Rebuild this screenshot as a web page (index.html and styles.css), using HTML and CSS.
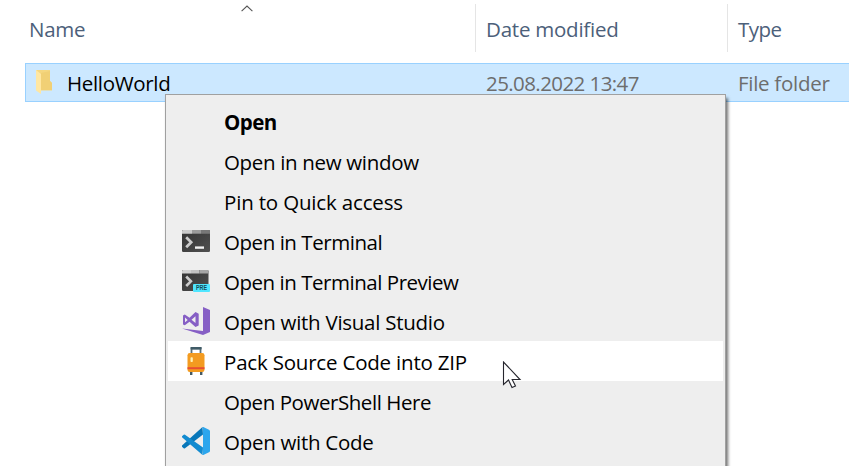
FILE: index.html
```html
<!DOCTYPE html>
<html lang="en">
<head>
<meta charset="utf-8">
<title>Explorer</title>
<link rel="stylesheet" href="styles.css">
</head>
<body>
<main class="explorer">
  <header class="columns">
    <div class="column"><span class="t-name">Name</span></div>
    <div class="column"><span class="t-date">Date modified</span></div>
    <div class="column"><span class="t-type">Type</span></div>
  </header>
  <svg class="sort" viewBox="0 0 12 7"><path d="M.6 6.2 6 1l5.4 5.2" fill="none" stroke="#555" stroke-width="1.1"/></svg>
  <section class="file">
    <div class="file-name">
      <svg class="folder" viewBox="0 0 18 25">
        <path d="M1 1h14v11l2 2v7.500H5z" fill="#f5d780"/>
        <path d="M6 4l9-2v10l2 2v7H6z" fill="#f1d075"/>
        <path d="M1 1l5 4v20l-5-3.500z" fill="#ffe7a2"/>
      </svg>
      <span class="t-hello">HelloWorld</span>
    </div>
    <div class="meta"><span class="t-stamp">25.08.2022 13:47</span></div>
    <div class="meta"><span class="t-folder">File folder</span></div>
  </section>
</main>
<nav class="menu">
  <div class="item"><span class="icon"></span><b class="m1">Open</b></div>
  <div class="item"><span class="icon"></span><span class="m2">Open in new window</span></div>
  <div class="item"><span class="icon"></span><span class="m3">Pin to Quick access</span></div>
  <div class="item"><svg class="icon" viewBox="0 0 28 28">
    <defs><linearGradient id="term" x1="0" y1="0" x2="1" y2="1"><stop stop-color="#333"/><stop offset="1" stop-color="#505050"/></linearGradient></defs>
    <rect y="3" width="28" height="22" rx="1.2" fill="url(#term)"/>
    <path d="M1.2 3H10v3.700H0V4.200Q0 3 1.200 3z" fill="#cbcbcb"/><path d="M10 3h9v3.700h-9z" fill="#9b9b9b"/><path d="M19 3h7.800q1.200 0 1.200 1.200v2.500h-9z" fill="#777"/>
    <path d="M4.200 10.300l5 5-5 5" fill="none" stroke="#ccc" stroke-width="2.700"/><path d="M13 19.400h9v2.400h-9z" fill="#f2f2f2"/>
  </svg><span class="m4">Open in Terminal</span></div>
  <div class="item"><svg class="icon" viewBox="0 0 28 28">
    <rect y="3" width="26.500" height="21" rx="1.200" fill="url(#term)"/>
    <path d="M1.200 3H9v3.500H0V4.200Q0 3 1.200 3z" fill="#d2d2d2"/><path d="M9 3h8.500v3.500H9z" fill="#c2c2c2"/><path d="M17.500 3h8q1 0 1 1.200v2.300h-9z" fill="#a5a5a5"/>
    <path d="M4.200 9.500l4.700 4.800L4.200 19" fill="none" stroke="#ccc" stroke-width="2.600"/>
    <rect x="11" y="17" width="17" height="8" rx="1" fill="#50e6ff"/>
    <text x="14" y="23.400" class="pre" textLength="11" lengthAdjust="spacingAndGlyphs">PRE</text>
  </svg><span class="m5">Open in Terminal Preview</span></div>
  <div class="item"><svg class="icon" viewBox="0 0 28 28">
    <path d="M21 0l7 3v22l-7 3L0 21.500l21 2.400z" fill="#865fc5"/>
    <path fill-rule="evenodd" d="M1 8.500 2.800 7.500 7.500 10.800 13.500 5l3.200 1.800v11.700L13.500 20l-6-5.200-4.700 3.500L1 17.500zM3 10.500v4.800l2.700-2.400zM13.500 9.300l-4 3.400 4 3.400z" fill="#865fc5"/>
  </svg><span class="m6">Open with Visual Studio</span></div>
  <div class="item selected"><svg class="icon" viewBox="0 0 28 28">
    <path d="M9.500 7V1.500h9V7" fill="none" stroke="#5b7079" stroke-width="1.800"/><path d="M8.600 0h11v2.400h-11z" fill="#405b67"/>
    <path d="M7.500 24h3v1.500h-3zm10.500 0h3v1.500h-3z" fill="#ccd5dc"/><path d="M8 25h2.400v3H8zm10 0h2.400v3H18z" fill="#455a64"/>
    <rect x="5.500" y="6" width="17" height="19" rx="2.300" fill="#f39b20"/><path d="M5.500 20.200h17v2h-17z" fill="#e84e32"/><rect x="8.500" y="10.300" width="2.300" height="4.700" rx=".8" fill="#fff1b5"/>
  </svg><span class="m7">Pack Source Code into ZIP</span></div>
  <div class="item"><span class="icon"></span><span class="m8">Open PowerShell Here</span></div>
  <div class="item"><svg class="icon" viewBox="0 0 28 28">
    <path d="M0 18.500 20.500 0 21 7.500 3 21.200q-.7.500-1.300 0L0 19.700z" fill="#0877b9"/>
    <path d="M0 9.300 1.700 7.700q.6-.5 1.300 0L21 20.500 20.500 28 0 10.200z" fill="#128bd0"/>
    <path d="M20 0q.6-.2 1.300.1l5.700 2.700q1 .5 1 1.500v19.400q0 1-1 1.500l-5.700 2.700q-.7.300-1.300 0l1-1V1z" fill="#2ca6ed"/>
  </svg><span class="m9">Open with Code</span></div>
</nav>
<svg class="cursor" viewBox="0 0 20 28"><path d="M1.500 1v22.500l5-4.500 3.500 7.500 3.500-1.500-3.300-6.500H18z" fill="#fff" stroke="#26262e" stroke-width="1.100"/></svg>
</body>
</html>
```
FILE: styles.css
```css
* { box-sizing: border-box; }
body {
  margin: 0;
  height: 466px;
  overflow: hidden;
  position: relative;
  background: #fff;
  color: #000;
  font: 20.5px/28px "Open Sans", "Noto Sans", sans-serif;
  white-space: nowrap;
}
.explorer { padding-top: 4px; }
.columns, .file { display: grid; grid-template-columns: 450px 252px 1fr; }
.columns { margin-left: 25px; height: 48px; color: #4c607a; }
.column { padding: 11px 0 0 10px; border-right: 1px solid #e5e5e5; }
.column:first-child { padding-left: 4px; }
.column:last-child { border: 0; }
.columns { grid-template-columns: 451px 252px 1fr; }
.sort { position: absolute; left: 241px; top: 5px; width: 12px; height: 7px; }
.file {
  margin: 11px 0 0 25px;
  height: 39px;
  background: #cce8ff;
  border: 1px solid #99d1ff;
  border-right: 0;
  align-items: center;
}
.file-name { display: flex; align-items: center; padding-left: 9px; }
.folder { width: 18px; height: 25px; margin: -2px 14px 0 0; }
.meta { padding-left: 10px; color: #6d6d6d; }
.menu {
  position: absolute;
  left: 165px;
  top: 94px;
  width: 561px;
  height: 390px;
  padding: 6px 2px;
  background: #eee;
  border: 1px solid #a0a0a0;
  box-shadow: 2px 4px 3px rgba(0, 0, 0, .55);
}
.item { display: flex; align-items: center; height: 40px; padding-left: 14px; }
.item > span:last-child, .item > b { padding-top: 2px; }
.icon { width: 28px; height: 28px; margin-right: 14px; flex: none; }
.selected { background: #fff; }
.pre { font: bold 6.500px "Liberation Sans", sans-serif; fill: #124b58; }
.cursor { position: absolute; left: 502px; top: 361px; width: 20px; height: 28px; }

/* Tracking per label */
.t-name { letter-spacing: -.3px; }
.t-date { letter-spacing: -.23px; }
.t-type { letter-spacing: -.5px; }
.t-hello { letter-spacing: -.33px; }
.t-stamp { letter-spacing: -.58px; }
.t-folder { letter-spacing: -.28px; }
.m1 { letter-spacing: -.55px; }
.m2 { letter-spacing: -.33px; }
.m3 { letter-spacing: -.17px; }
.m4 { letter-spacing: -.45px; }
.m5 { letter-spacing: -.47px; }
.m6 { letter-spacing: -.27px; }
.m7 { letter-spacing: -.2px; }
.m8 { letter-spacing: -.44px; }
.m9 { letter-spacing: -.29px; }
```
